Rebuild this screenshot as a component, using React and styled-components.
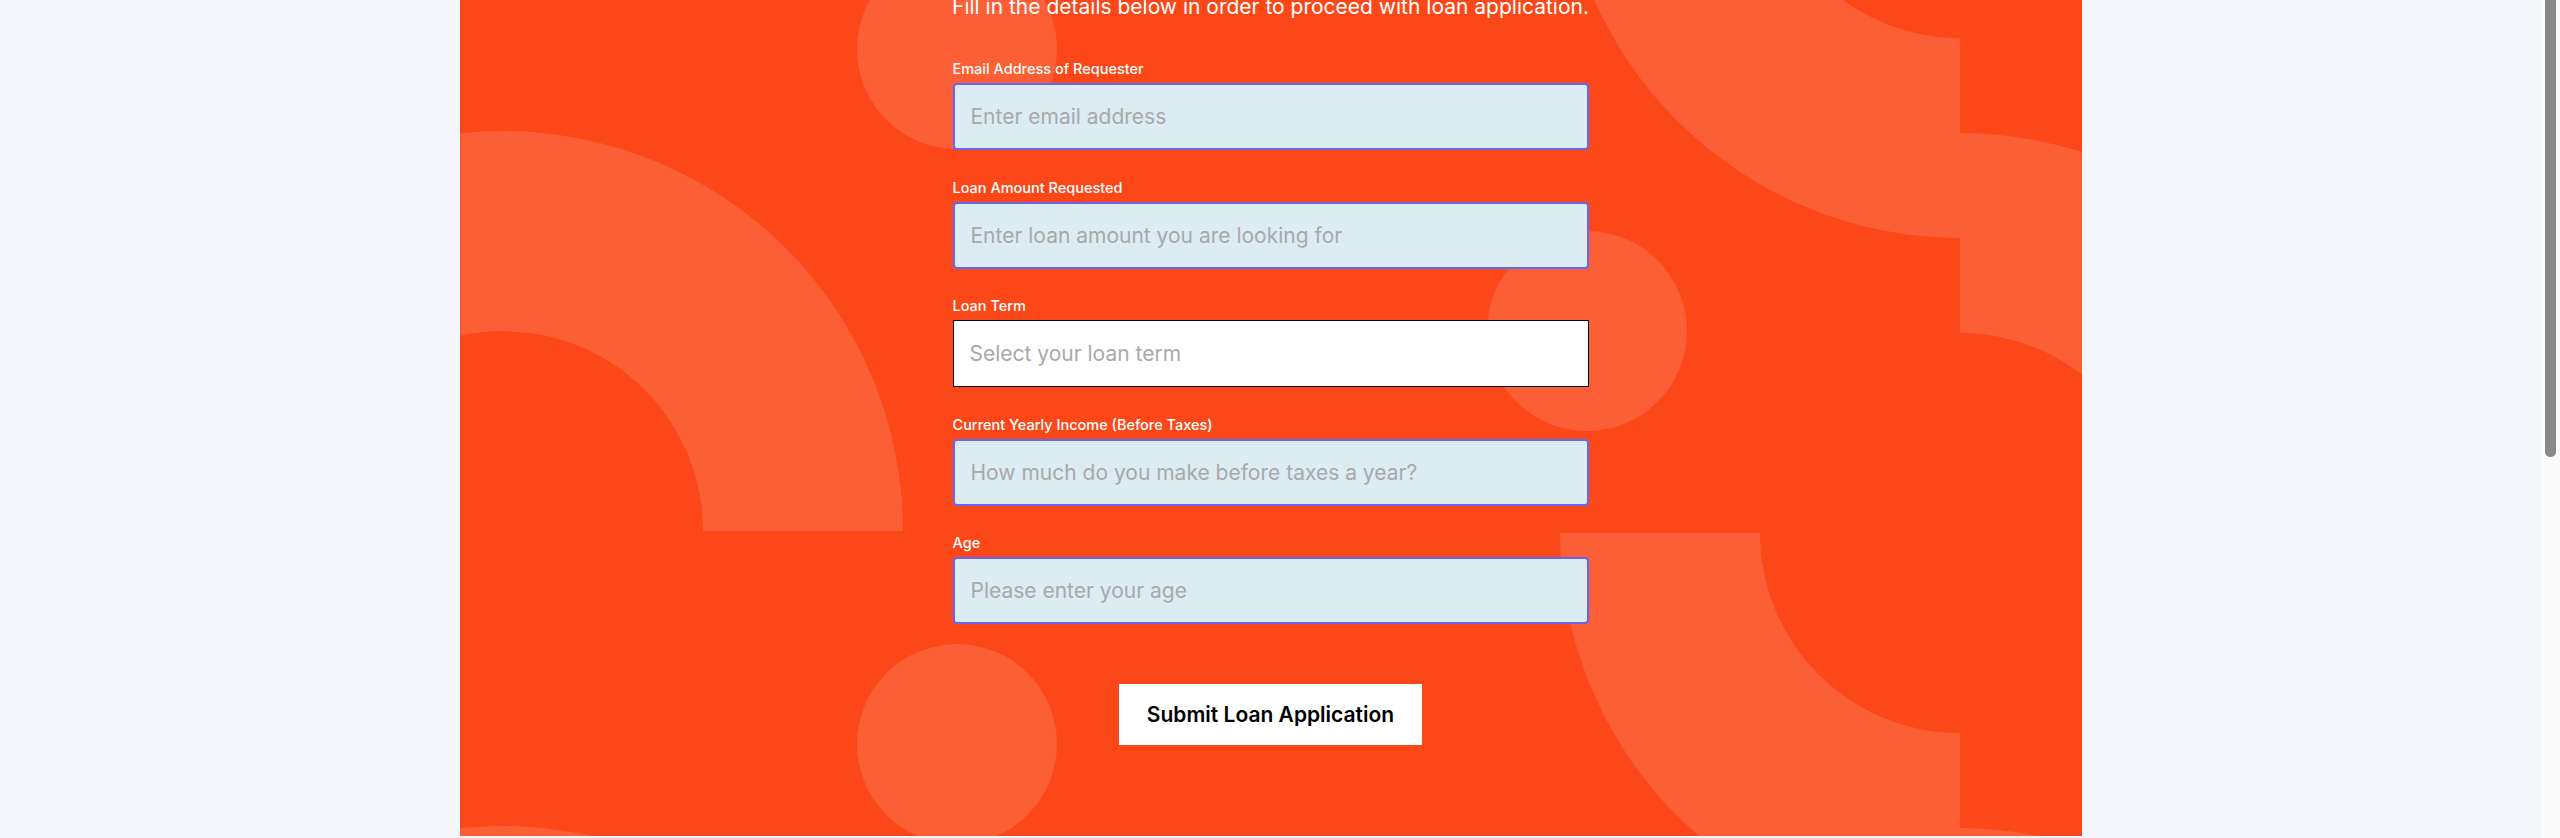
import React from "react";
import styled, { createGlobalStyle } from "styled-components";

const GlobalStyle = createGlobalStyle`
  html, body {
    margin: 0;
    padding: 0;
  }
  body {
    background: #f4f6fb;
    font-family: Inter, "Open Sans", "Liberation Sans", sans-serif;
  }
  * {
    box-sizing: border-box;
  }
`;

const fields = [
  { id: "email", label: "Email Address of Requester", placeholder: "Enter email address", type: "email" },
  { id: "amount", label: "Loan Amount Requested", placeholder: "Enter loan amount you are looking for", type: "text" },
  { id: "term", label: "Loan Term", placeholder: "Select your loan term", select: true },
  { id: "income", label: "Current Yearly Income (Before Taxes)", placeholder: "How much do you make before taxes a year?", type: "text" },
  { id: "age", label: "Age", placeholder: "Please enter your age", type: "number" },
];

const terms = ["6 months", "12 months", "24 months", "36 months", "60 months"];

// the background pattern repeats every 695px down the panel
function Decor() {
  const period = 695;
  return (
    <DecorSvg viewBox="0 0 1622 836" aria-hidden="true">
      {[-1, 0, 1].map((k) => (
        <g key={k} transform={`translate(0 ${k * period})`}>
          <path d="M -357 531 A 400 400 0 0 1 443 531 L 243 531 A 200 200 0 0 0 -157 531 Z" />
          <circle cx="497" cy="49" r="100" />
          <circle cx="1127" cy="331" r="100" />
          <path d="M 1500 133 A 400 400 0 0 1 1900 533 L 1700 533 A 200 200 0 0 0 1500 333 Z" />
          <path d="M 1100 533 A 400 400 0 0 0 1500 933 L 1500 733 A 200 200 0 0 1 1300 533 Z" />
        </g>
      ))}
    </DecorSvg>
  );
}

export default function App() {
  return (
    <>
      <GlobalStyle />
      <Frame>
        <Content>
          <Panel>
            <Decor />
            <Form onSubmit={(e) => e.preventDefault()}>
              <Lead>Fill in the details below in order to proceed with loan application.</Lead>
              <FieldList>
                {fields.map((f) => (
                  <Field key={f.id}>
                    <Label htmlFor={f.id}>{f.label}</Label>
                    {f.select ? (
                      <Select id={f.id} defaultValue="">
                        <option value="" disabled>
                          {f.placeholder}
                        </option>
                        {terms.map((t) => (
                          <option key={t} value={t}>
                            {t}
                          </option>
                        ))}
                      </Select>
                    ) : (
                      <Input id={f.id} type={f.type} placeholder={f.placeholder} />
                    )}
                  </Field>
                ))}
              </FieldList>
              <Actions>
                <SubmitButton type="submit">Submit Loan Application</SubmitButton>
              </Actions>
            </Form>
          </Panel>
        </Content>
        <ScrollRail aria-hidden="true">
          <ScrollThumb />
        </ScrollRail>
      </Frame>
    </>
  );
}

const Frame = styled.div`
  display: flex;
  height: 100vh;
  overflow: hidden;
`;

const Content = styled.div`
  flex: 1;
  min-width: 0;
`;

const ScrollRail = styled.aside`
  flex: 0 0 19px;
  padding: 0 4px;
  background: #fafafa;
`;

const ScrollThumb = styled.div`
  height: 457px;
  background: #888;
  border-radius: 0 0 5px 5px;
`;

const Panel = styled.main`
  position: relative;
  width: 1622px;
  height: 836px;
  margin: 0 auto;
  padding-bottom: 91px;
  background: #fc4819;
  overflow: hidden;
  display: flex;
  flex-direction: column;
  align-items: center;
  justify-content: flex-end;
`;

const DecorSvg = styled.svg`
  position: absolute;
  inset: 0;
  width: 1622px;
  height: 836px;
  fill: #fc5e35;
`;

const Form = styled.form`
  position: relative;
  width: 636px;
  flex-shrink: 0;
  display: flex;
  flex-direction: column;
`;

const Lead = styled.p`
  margin: 0 -30px 39px;
  color: #fff;
  font-size: 21px;
  line-height: 27px;
  text-align: center;
  white-space: nowrap;
`;

const FieldList = styled.div`
  display: flex;
  flex-direction: column;
  gap: 27.5px;
`;

const Field = styled.div`
  display: flex;
  flex-direction: column;
  gap: 4px;
`;

const Label = styled.label`
  color: #fff;
  font-size: 14.5px;
  font-weight: 500;
  line-height: 20px;
`;

const Input = styled.input`
  height: 67px;
  padding: 0 16px;
  border: 2px solid #6466f8;
  border-radius: 4px;
  background: #dbecf2;
  color: #333;
  font-family: inherit;
  font-size: 21px;
  outline: none;

  &::placeholder {
    color: #a9a9a9;
  }
`;

const Select = styled.select`
  height: 67px;
  padding: 0 16px;
  border: 1px solid #000;
  border-radius: 0;
  background: #fff;
  color: #a9a9a9;
  font-family: inherit;
  font-size: 21px;
  appearance: none;
  outline: none;
`;

const Actions = styled.div`
  display: flex;
  justify-content: center;
  margin-top: 60px;
`;

const SubmitButton = styled.button`
  padding: 18px 28px;
  border: none;
  background: #fff;
  color: #000;
  font-family: inherit;
  font-size: 21px;
  font-weight: 600;
  line-height: 25px;
  cursor: pointer;
`;
